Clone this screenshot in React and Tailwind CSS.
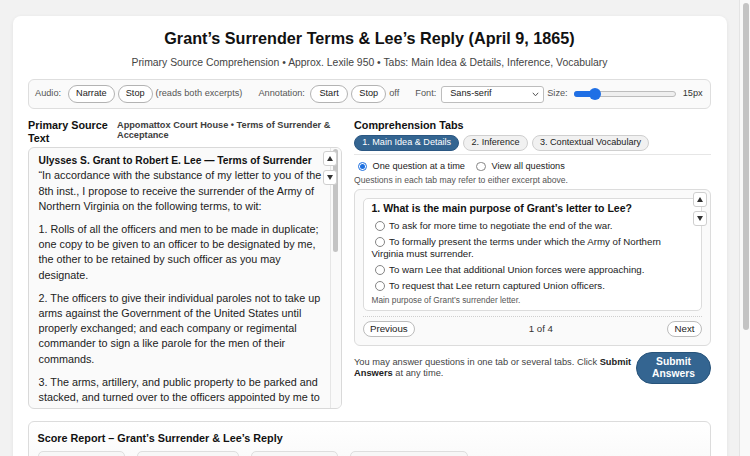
import { useState } from 'react'

function Pill({ children, className = '' }) {
  return (
    <button
      className={
        'h-[18.5px] shrink-0 rounded-full border border-[#b3b3b3] bg-white px-[7px] text-[9.2px] leading-none text-[#222] ' +
        className
      }
    >
      {children}
    </button>
  )
}

function ScrollBtns() {
  return (
    <div className="flex flex-col gap-[4px]">
      <button className="flex h-[15px] w-[14px] items-center justify-center rounded-[3px] border border-[#cfcfcf] bg-white">
        <svg width="6" height="5" viewBox="0 0 6 5">
          <polygon points="3,0 6,5 0,5" fill="#333" />
        </svg>
      </button>
      <button className="flex h-[15px] w-[14px] items-center justify-center rounded-[3px] border border-[#cfcfcf] bg-white">
        <svg width="6" height="5" viewBox="0 0 6 5">
          <polygon points="0,0 6,0 3,5" fill="#333" />
        </svg>
      </button>
    </div>
  )
}

function Radio({ checked }) {
  if (checked) {
    return (
      <span className="inline-flex h-[9.5px] w-[9.5px] shrink-0 items-center justify-center rounded-full border border-[#1c6fe0] bg-white">
        <span className="h-[5px] w-[5px] rounded-full bg-[#1c6fe0]" />
      </span>
    )
  }
  return <span className="inline-block h-[9.5px] w-[9.5px] shrink-0 rounded-full border border-[#858585] bg-white" />
}

const options = [
  'To ask for more time to negotiate the end of the war.',
  'To formally present the terms under which the Army of Northern Virginia must surrender.',
  'To warn Lee that additional Union forces were approaching.',
  'To request that Lee return captured Union officers.',
]

const tabs = ['1. Main Idea & Details', '2. Inference', '3. Contextual Vocabulary']

export default function App() {
  const [tab, setTab] = useState(0)
  const [mode, setMode] = useState('one')

  return (
    <div className="flex h-screen overflow-hidden bg-[#f2f2f2] font-['Liberation_Sans',Arial,Helvetica,sans-serif] text-[#222]">
      <div className="min-w-0 flex-1 overflow-hidden pb-[10px] pl-[13px] pr-[12px] pt-[16px]">
        <div className="rounded-[8px] bg-white pb-[16px] pl-[15px] pr-[16px] pt-[12.5px] shadow-[0_1px_4px_rgba(0,0,0,0.07)]">
          <h1 className="text-center text-[16.2px] font-bold leading-[19px] text-[#111]">
            Grant’s Surrender Terms &amp; Lee’s Reply (April 9, 1865)
          </h1>
          <p className="mt-[9.5px] text-center text-[10.4px] leading-[12px] text-[#444]">
            Primary Source Comprehension • Approx. Lexile 950 • Tabs: Main Idea &amp; Details, Inference, Vocabulary
          </p>

          {/* toolbar */}
          <div className="mt-[10px] flex h-[30px] items-center rounded-[6px] border border-[#dedede] bg-[#fafafa] px-[6px] text-[9.2px] text-[#555]">
            <span>Audio:</span>
            <Pill className="ml-[7px]">Narrate</Pill>
            <Pill className="ml-[3px]">Stop</Pill>
            <span className="ml-[3px]">(reads both excerpts)</span>
            <span className="ml-[16px]">Annotation:</span>
            <Pill className="ml-[5px] px-[8.5px]">Start</Pill>
            <Pill className="ml-[3px]">Stop</Pill>
            <span className="ml-[3px]">off</span>
            <span className="ml-[16px]">Font:</span>
            <div className="ml-[5px] flex h-[17px] w-[103px] items-center justify-between rounded-[3px] border border-[#bdbdbd] bg-white pl-[8px] pr-[4px] text-[9.2px] text-[#222]">
              <span>Sans-serif</span>
              <svg width="7" height="5" viewBox="0 0 7 5" fill="none">
                <path d="M0.8 0.8 L3.5 3.8 L6.2 0.8" stroke="#555" strokeWidth="1" />
              </svg>
            </div>
            <span className="ml-[3px]">Size:</span>
            <div className="relative ml-[6.5px] flex h-[12px] w-[102px] items-center">
              <div className="h-[5.5px] w-full rounded-full border border-[#bdbdbd] bg-[#efefef]" />
              <div className="absolute left-0 top-[3.25px] h-[5.5px] w-[22px] rounded-l-full bg-[#1f6fe5]" />
              <div className="absolute left-[15px] top-0 h-[12px] w-[12px] rounded-full bg-[#1f6fe5]" />
            </div>
            <span className="ml-[6.5px] text-[#333]">15px</span>
          </div>

          {/* columns */}
          <div className="mt-[9.5px] grid grid-cols-[314px_357px] items-start gap-x-[12px]">
            {/* left */}
            <div>
              <div className="flex items-start gap-[7px]">
                <h2 className="w-[82px] shrink-0 text-[10.8px] font-bold leading-[13px] text-[#111]">
                  Primary Source Text
                </h2>
                <div className="pt-[1px] text-[9.2px] font-bold leading-[10px] text-[#3d3d3d]">
                  Appomattox Court House • Terms of Surrender &amp; Acceptance
                </div>
              </div>
              <div className="relative mt-[2px]">
                <div className="flex h-[262px] overflow-hidden rounded-[6px] border border-[#d9d9d9] bg-[#fafafa]">
                  <div className="min-w-0 flex-1 pl-[9.5px] pr-[5px] pt-[5.5px] text-[10.8px] leading-[15.25px] text-[#222]">
                    <h3 className="text-[10.25px] font-bold text-[#111]">
                      Ulysses S. Grant to Robert E. Lee — Terms of Surrender
                    </h3>
                    <p className="mb-[7.8px]">
                      “In accordance with the substance of my letter to you of the 8th inst., I propose to receive the
                      surrender of the Army of Northern Virginia on the following terms, to wit:
                    </p>
                    <p className="mb-[7.8px]">
                      1. Rolls of all the officers and men to be made in duplicate; one copy to be given to an officer
                      to be designated by me, the other to be retained by such officer as you may designate.
                    </p>
                    <p className="mb-[7.8px]">
                      2. The officers to give their individual paroles not to take up arms against the Government of
                      the United States until properly exchanged; and each company or regimental commander to sign a
                      like parole for the men of their commands.
                    </p>
                    <p className="mb-[7.8px]">
                      3. The arms, artillery, and public property to be parked and stacked, and turned over to the
                      officers appointed by me to receive them.
                    </p>
                    <p className="mb-[7.8px]">
                      4. This will not embrace the side-arms of the officers, nor their private horses or baggage.
                    </p>
                  </div>
                  <div className="w-[11px] shrink-0 border-l border-[#e6e6e6] bg-[#fafafa] pt-[1px]">
                    <div className="ml-[2px] h-[103px] w-[5px] rounded-full bg-[#c4c4c4]" />
                  </div>
                </div>
                <div className="absolute right-[5px] top-[4px]">
                  <ScrollBtns />
                </div>
              </div>
            </div>

            {/* right */}
            <div>
              <h2 className="text-[10.8px] font-bold leading-[13px] text-[#111]">Comprehension Tabs</h2>
              <div className="mt-[3.5px] flex gap-[4px] border-b border-[#e6e6e6] pb-[3px]">
                {tabs.map((t, i) => (
                  <button
                    key={t}
                    onClick={() => setTab(i)}
                    className={
                      i === tab
                        ? 'h-[16px] rounded-full border border-[#2b5782] bg-[#346591] px-[7.2px] text-[9.1px] leading-none text-white'
                        : 'h-[16px] rounded-full border border-[#cfcfcf] bg-[#f1f1f1] px-[7.2px] text-[9.1px] leading-none text-[#222]'
                    }
                  >
                    {t}
                  </button>
                ))}
              </div>
              <div className="mt-[6px] flex items-center text-[9.2px] leading-[11px] text-[#222]">
                <label className="ml-[3.5px] flex items-center gap-[5.5px]" onClick={() => setMode('one')}>
                  <Radio checked={mode === 'one'} />
                  One question at a time
                </label>
                <label className="ml-[11.5px] flex items-center gap-[5.5px]" onClick={() => setMode('all')}>
                  <Radio checked={mode === 'all'} />
                  View all questions
                </label>
              </div>
              <p className="mt-[3px] text-[8.6px] leading-[10px] text-[#555]">
                Questions in each tab may refer to either excerpt above.
              </p>

              <div className="relative mt-[4px] rounded-[6px] border border-[#dcdcdc] bg-[#fafafa] p-[8px]">
                <div className="rounded-[5px] border border-[#dcdcdc] bg-white px-[7.5px] pb-[5px] pt-[3px]">
                  <h4 className="text-[10.5px] font-bold leading-[13px] text-[#111]">
                    1. What is the main purpose of Grant’s letter to Lee?
                  </h4>
                  <div className="mt-[5px]">
                    {options.map((o) => (
                      <label key={o} className="mb-[4px] block text-[9.7px] leading-[12px] text-[#222]">
                        <span className="ml-[3.6px] mr-[4.5px] inline-block h-[9.5px] w-[9.5px] rounded-full border border-[#858585] bg-white align-[-1.5px]" />
                        {o}
                      </label>
                    ))}
                  </div>
                  <p className="mt-[-1px] text-[8.3px] leading-[10px] text-[#555]">
                    Main purpose of Grant’s surrender letter.
                  </p>
                </div>
                <div className="mt-[5px] flex items-center justify-between border-t border-dotted border-[#cfcfcf] pt-[4px]">
                  <button className="h-[16px] rounded-full border border-[#bcbcbc] bg-white px-[6px] text-[9.7px] leading-none text-[#222]">
                    Previous
                  </button>
                  <span className="text-[9.7px] text-[#333]">1 of 4</span>
                  <button className="h-[16px] rounded-full border border-[#bcbcbc] bg-white px-[6.5px] text-[9.7px] leading-none text-[#222]">
                    Next
                  </button>
                </div>
                <div className="absolute right-[3.5px] top-[1.5px]">
                  <ScrollBtns />
                </div>
              </div>

              <div className="mt-[5.5px] flex items-center justify-between gap-[4px]">
                <p className="text-[9.3px] leading-[11px] text-[#444]">
                  You may answer questions in one tab or several tabs. Click <b className="text-[#222]">Submit Answers</b>{' '}
                  at any time.
                </p>
                <button className="h-[32.5px] w-[75px] shrink-0 rounded-full border border-[#27537a] bg-[#346591] px-[10px] text-[10.3px] font-bold leading-[12px] text-white">
                  Submit Answers
                </button>
              </div>
            </div>
          </div>

          {/* score report */}
          <div className="mt-[12.5px] rounded-[6px] border border-[#dcdcdc] bg-gradient-to-b from-white to-[#f4f4f4] px-[8.5px] pb-[12px] pt-[9.5px]">
            <h2 className="text-[10.8px] font-bold leading-[13px] text-[#111]">
              Score Report – Grant’s Surrender &amp; Lee’s Reply
            </h2>
            <div className="mt-[6.5px] flex gap-[12px]">
              {[
                ['w-[87px]', 'Answered', '0 / 12'],
                ['w-[102px]', 'Correct', '0'],
                ['w-[87px]', 'Percent', '0%'],
                ['w-[118px]', 'Tabs completed', '0 of 3'],
              ].map(([w, label, value]) => (
                <div key={label} className={w + ' rounded-[5px] border border-[#dedede] bg-[#f7f7f7] px-[7px] py-[6px]'}>
                  <div className="text-[8.6px] leading-[10px] text-[#555]">{label}</div>
                  <div className="mt-[2px] text-[12px] font-bold leading-[15px] text-[#222]">{value}</div>
                </div>
              ))}
            </div>
          </div>
        </div>
      </div>

      {/* page scrollbar */}
      <div className="w-[11px] shrink-0 border-l border-[#e4e4e4] bg-[#f9f9f9] pt-[3px]">
        <div className="ml-[3px] h-[327px] w-[6px] rounded-full bg-[#c4c4c4]" />
      </div>
    </div>
  )
}
